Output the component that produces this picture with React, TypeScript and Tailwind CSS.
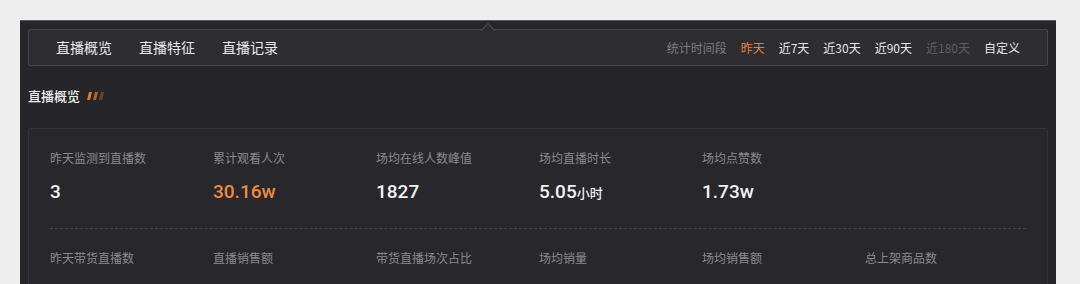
const tabs = ["直播概览", "直播特征", "直播记录"];

const ranges = [
  { label: "昨天", tone: "active" },
  { label: "近7天", tone: "normal" },
  { label: "近30天", tone: "normal" },
  { label: "近90天", tone: "normal" },
  { label: "近180天", tone: "disabled" },
  { label: "自定义", tone: "normal" },
];

type Stat = { label: string; value: string; unit?: string; orange?: boolean };

const row1: Stat[] = [
  { label: "昨天监测到直播数", value: "3" },
  { label: "累计观看人次", value: "30.16w", orange: true },
  { label: "场均在线人数峰值", value: "1827" },
  { label: "场均直播时长", value: "5.05", unit: "小时" },
  { label: "场均点赞数", value: "1.73w" },
];

const row2: Stat[] = [
  { label: "昨天带货直播数", value: "3" },
  { label: "直播销售额", value: "116.9w", orange: true },
  { label: "带货直播场次占比", value: "100%" },
  { label: "场均销量", value: "3737" },
  { label: "场均销售额", value: "38.9w" },
  { label: "总上架商品数", value: "7" },
];

const StatRow = ({ items }: { items: Stat[] }) => (
  <div className="flex px-[21px]">
    {items.map((s) => (
      <div key={s.label} className="w-[163px] shrink-0">
        <div className="text-[12px] leading-[17px] text-[#8b8a8f]">{s.label}</div>
        <div
          className={`mt-[14px] font-['Roboto','Noto_Sans_CJK_SC',sans-serif] text-[19px] font-medium leading-[24px] ${
            s.orange ? "text-[#ef8a3e]" : "text-[#f2f2f2]"
          }`}
        >
          {s.value}
          {s.unit && <span className="text-[13px] font-['Noto_Sans_CJK_SC',sans-serif]">{s.unit}</span>}
        </div>
      </div>
    ))}
  </div>
);

export default function App() {
  return (
    <div className="h-[284px] w-[1080px] overflow-hidden bg-[#eeeeee] pl-[20px] pt-[20px] font-['Noto_Sans_CJK_SC',sans-serif]">
      <div className="relative h-[264px] w-[1036px] border-t border-[#5a595e] bg-[#262529] px-[8px] pt-[8px]">
        {/* notch on the tab bar */}
        <svg className="absolute left-[461px] top-[1px]" width="14" height="9" viewBox="0 0 14 9">
          <path d="M0 8.5 L7 1.5 L14 8.5" fill="#2e2d32" stroke="#4c4b50" strokeWidth="1.2" />
        </svg>
        <div className="flex h-[37px] items-center justify-between rounded-[2px] border border-[#47464b] bg-[#2e2d32] pl-[27px] pr-[27px]">
          <div className="flex gap-[27px] text-[14px] text-[#e8e8e8]">
            {tabs.map((t) => (
              <span key={t}>{t}</span>
            ))}
          </div>
          <div className="flex items-center gap-[14px] text-[12px]">
            <span className="text-[#7c7b80]">统计时间段</span>
            {ranges.map((r) => (
              <span
                key={r.label}
                className={
                  r.tone === "active"
                    ? "text-[#ef7f2f]"
                    : r.tone === "disabled"
                    ? "text-[#5f5e63]"
                    : "text-[#e6e6e6]"
                }
              >
                {r.label}
              </span>
            ))}
          </div>
        </div>

        <div className="mt-[20px] flex items-center gap-[6px]">
          <span className="text-[13px] font-medium text-[#f0f0f0]">直播概览</span>
          <svg width="18" height="10" viewBox="0 0 18 10">
            <path d="M3 1h3l-2 8H1z" fill="#e07a2e" />
            <path d="M9 1h3l-2 8H7z" fill="#c9773a" opacity="0.8" />
            <path d="M15 1h3l-2 8h-3z" fill="#8a5a35" opacity="0.6" />
          </svg>
        </div>

        <div className="mt-[22px] h-[200px] rounded-[2px] border border-[#333237] bg-[#28272b] pt-[20px]">
          <StatRow items={row1} />
          <div className="mx-[21px] mt-[23px] border-t border-dashed border-[#45444a]" />
          <div className="mt-[20px]">
            <StatRow items={row2} />
          </div>
        </div>
      </div>
    </div>
  );
}
